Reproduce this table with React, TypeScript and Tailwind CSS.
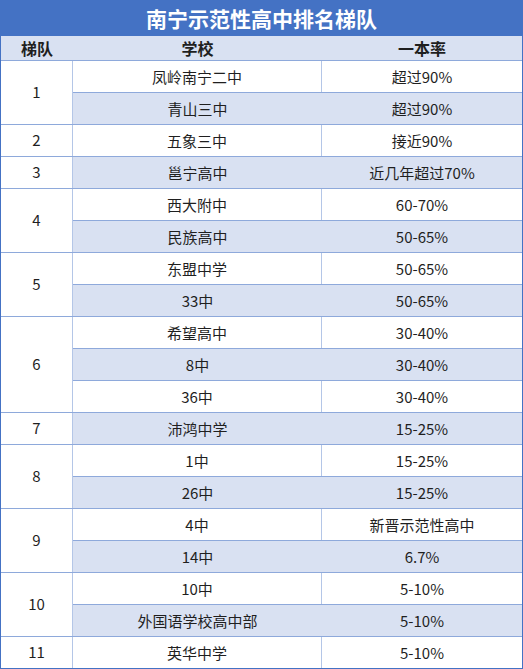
import React from "react";

type Row = { school: string; rate: string };
type Group = { tier: string; rows: Row[] };

const groups: Group[] = [
  { tier: "1", rows: [{ school: "凤岭南宁二中", rate: "超过90%" }, { school: "青山三中", rate: "超过90%" }] },
  { tier: "2", rows: [{ school: "五象三中", rate: "接近90%" }] },
  { tier: "3", rows: [{ school: "邕宁高中", rate: "近几年超过70%" }] },
  { tier: "4", rows: [{ school: "西大附中", rate: "60-70%" }, { school: "民族高中", rate: "50-65%" }] },
  { tier: "5", rows: [{ school: "东盟中学", rate: "50-65%" }, { school: "33中", rate: "50-65%" }] },
  { tier: "6", rows: [{ school: "希望高中", rate: "30-40%" }, { school: "8中", rate: "30-40%" }, { school: "36中", rate: "30-40%" }] },
  { tier: "7", rows: [{ school: "沛鸿中学", rate: "15-25%" }] },
  { tier: "8", rows: [{ school: "1中", rate: "15-25%" }, { school: "26中", rate: "15-25%" }] },
  { tier: "9", rows: [{ school: "4中", rate: "新晋示范性高中" }, { school: "14中", rate: "6.7%" }] },
  { tier: "10", rows: [{ school: "10中", rate: "5-10%" }, { school: "外国语学校高中部", rate: "5-10%" }] },
  { tier: "11", rows: [{ school: "英华中学", rate: "5-10%" }] },
];

export default function App() {
  let idx = 0;
  return (
    <div
      className="w-[523px] h-[669px] bg-white text-[#1f1f1f]"
      style={{ fontFamily: '"Microsoft YaHei", "Noto Sans CJK SC", "Noto Sans", sans-serif' }}
    >
      <div className="border-l border-r border-b border-[#4472C4]">
        <div className="h-[36px] bg-[#4472C4] flex items-center justify-center text-white text-[21px] font-bold leading-none">
          南宁示范性高中排名梯队
        </div>
        <div className="h-[24px] bg-[#D9E1F2] flex text-[16px] font-bold leading-none">
          <div className="w-[72px] flex items-center justify-center">梯队</div>
          <div className="w-[249px] flex items-center justify-center">学校</div>
          <div className="flex-1 flex items-center justify-center">一本率</div>
        </div>
        {groups.map((g) => (
          <div key={g.tier} className="flex border-t border-[#8EA9DB]">
            <div className="w-[72px] shrink-0 border-r border-[#B4C6E7] flex items-center justify-center text-[15px]">
              {g.tier}
            </div>
            <div className="flex-1 flex flex-col">
              {g.rows.map((r, i) => {
                const shaded = idx % 2 === 1;
                idx++;
                return (
                  <div
                    key={r.school}
                    className={
                      (i === 0 ? "h-[31px] " : "h-[32px] border-t border-[#8EA9DB] ") +
                      (shaded ? "bg-[#D9E1F2] " : "bg-white ") +
                      "flex text-[15px] leading-none"
                    }
                  >
                    <div
                      className={
                        "w-[249px] shrink-0 flex items-center justify-center " +
                        (shaded ? "" : "border-r border-[#B4C6E7]")
                      }
                    >
                      {r.school}
                    </div>
                    <div className="flex-1 flex items-center justify-center">{r.rate}</div>
                  </div>
                );
              })}
            </div>
          </div>
        ))}
      </div>
    </div>
  );
}
